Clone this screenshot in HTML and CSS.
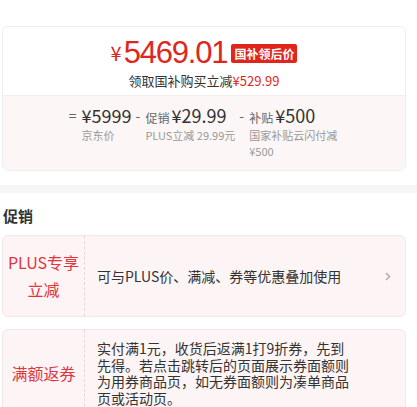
FILE: index.html
```html
<!doctype html>
<html>
  <head>
    <meta charset="utf-8" />
    <title>价格与促销</title>
    <link rel="stylesheet" href="styles.css">
  </head>

  <body>
    <div class="price-card">
      <div class="price-main">
        <div class="price-line">
          <span class="yen">¥</span><span class="num">5469.01</span>
          <span class="badge">国补领后价</span>
        </div>
        <div class="price-sub">领取国补购买立减<em>¥529.99</em></div>
      </div>

      <div class="breakdown">
        <div class="item">
          <span class="op">=</span>
          <div>
            <div class="amt">¥5999</div>
            <div class="note">京东价</div>
          </div>
        </div>
        <div class="item">
          <span class="op">-</span>
          <div>
            <div class="amt"><small>促销</small>¥29.99</div>
            <div class="note">PLUS立减 29.99元</div>
          </div>
        </div>
        <div class="item">
          <span class="op">-</span>
          <div>
            <div class="amt"><small>补贴</small>¥500</div>
            <div class="note narrow">国家补贴云闪付减 ¥500</div>
          </div>
        </div>
      </div>
    </div>

    <div class="divider"></div>

    <h3 class="section-title">促销</h3>

    <div class="promo">
      <div class="promo-tag">PLUS专享<br />立减</div>
      <div class="promo-body">
        <span>可与PLUS价、满减、券等优惠叠加使用</span>
        <svg class="arrow" width="6" height="9" viewBox="0 0 6 9">
          <path d="M1 1l3.5 3.5L1 8" fill="none" stroke="#c9a3a8" stroke-width="1.5" />
        </svg>
      </div>
    </div>

    <div class="promo">
      <div class="promo-tag">满额返券</div>
      <div class="promo-body long">
        实付满1元，收货后返满1打9折券，先到先得。若点击跳转后的页面展示券面额则为用券商品页，如无券面额则为凑单商品页或活动页。
      </div>
    </div>
  </body>
</html>
```

FILE: styles.css
```css
body {
  margin: 0;
  font-family: "Noto Sans CJK SC", "Noto Sans", sans-serif;
  color: #333;
  background: #fff;
}

.price-card {
  margin: 26px 11px 0 2px;
  border: 1px solid #eee;
  border-radius: 6px;
  overflow: hidden;
}

.price-main {
  padding: 9px 0 5px;
  text-align: center;
}

.price-line {
  display: flex;
  justify-content: center;
  align-items: center;
  height: 34px;
  line-height: 34px;
  color: #e1251b;
}

.yen {
  font-size: 20px;
  margin-right: 2px;
}

.num {
  font-family: "Liberation Sans", Arial, sans-serif;
  font-size: 31px;
  letter-spacing: -1.2px;
}

.badge {
  margin-left: 4px;
  padding: 0 3px;
  height: 19px;
  line-height: 19px;
  background-color: #e1251b;
  color: white;
  font-size: 12px;
  font-weight: bold;
  border-radius: 2px;
}

.price-sub {
  margin-top: 2px;
  font-size: 13px;
  line-height: 18px;
}

.price-sub em {
  font-style: normal;
  color: #e1251b;
}

.breakdown {
  display: flex;
  justify-content: center;
  gap: 4px;
  padding: 7px 0 11px;
  background-color: #fcf7f6;
  border-top: 1px solid #f6eeee;
}

.item {
  display: flex;
  align-items: flex-start;
}

.op {
  font-size: 14px;
  line-height: 24px;
  color: #666;
  margin-right: 5px;
}

.amt {
  font-size: 18px;
  line-height: 24px;
  height: 24px;
  color: #333;
}

.amt small {
  font-size: 12px;
  line-height: 1;
  color: #666;
  margin-right: 2px;
}

.note {
  font-size: 11px;
  line-height: 16px;
  color: #999;
}

.note.narrow {
  max-width: 90px;
}

.divider {
  height: 8px;
  margin-top: 14px;
  background-color: #f6f6f6;
}

.section-title {
  margin: 12px 0 8px 3px;
  font-size: 15px;
  line-height: 22px;
  font-weight: bold;
}

.promo {
  display: flex;
  margin: 0 11px 12px 2px;
  border: 1px solid #f3e6e6;
  border-radius: 6px;
  background-color: #fdf5f5;
}

.promo-tag {
  display: flex;
  align-items: center;
  justify-content: center;
  width: 81px;
  min-height: 80px;
  flex-shrink: 0;
  border-right: 1px dashed #e8d5d5;
  color: #e2333e;
  font-size: 16px;
  line-height: 27px;
  text-align: center;
}

.promo-body {
  flex: 1;
  display: flex;
  align-items: center;
  justify-content: space-between;
  padding: 0 14px 0 12px;
  font-size: 14px;
}

.promo-body.long {
  display: block;
  padding: 10px 50px 10px 12px;
  line-height: 16.5px;
}

.arrow {
  display: block;
}
```
